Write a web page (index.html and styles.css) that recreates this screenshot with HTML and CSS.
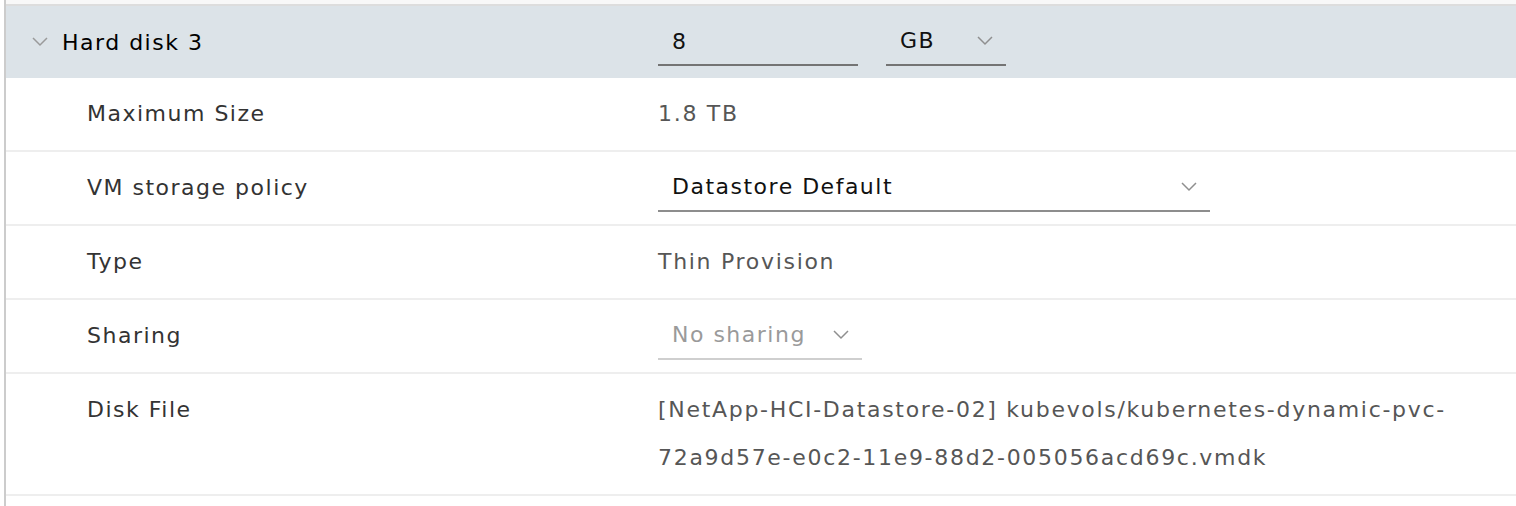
FILE: index.html
```html
<!DOCTYPE html>
<html lang="en">
<head>
<meta charset="utf-8">
<title>Hard disk 3</title>
<link rel="stylesheet" href="styles.css">
</head>
<body>
<div class="panel">
  <div class="top-strip"></div>
  <div class="stack-header">
    <div class="stack-title">
      <svg class="chev chev-head" width="16" height="10" viewBox="0 0 16 10"><polyline points="1,1 8,8 15,1"/></svg>
      <span>Hard disk 3</span>
    </div>
    <div class="stack-controls">
      <div class="field field-dark num">8</div>
      <div class="field field-dark select unit"><span>GB</span><svg class="chev" width="16" height="10" viewBox="0 0 16 10"><polyline points="1,1 8,8 15,1"/></svg></div>
    </div>
  </div>
  <div class="row">
    <div class="label">Maximum Size</div>
    <div class="value">1.8 TB</div>
  </div>
  <div class="row">
    <div class="label">VM storage policy</div>
    <div class="value"><div class="field field-mid select policy"><span>Datastore Default</span><svg class="chev" width="16" height="10" viewBox="0 0 16 10"><polyline points="1,1 8,8 15,1"/></svg></div></div>
  </div>
  <div class="row">
    <div class="label">Type</div>
    <div class="value">Thin Provision</div>
  </div>
  <div class="row">
    <div class="label">Sharing</div>
    <div class="value"><div class="field field-light select disabled sharing"><span>No sharing</span><svg class="chev" width="16" height="10" viewBox="0 0 16 10"><polyline points="1,1 8,8 15,1"/></svg></div></div>
  </div>
  <div class="row">
    <div class="label">Disk File</div>
    <div class="value">[NetApp-HCI-Datastore-02] kubevols/kubernetes-dynamic-pvc-<br>72a9d57e-e0c2-11e9-88d2-005056acd69c.vmdk</div>
  </div>
</div>
</body>
</html>
```
FILE: styles.css
```css
* { box-sizing: border-box; }
html, body { margin: 0; padding: 0; background: #fff; }
body {
  font-family: "DejaVu Sans", "Open Sans", sans-serif;
  font-size: 22px;
  letter-spacing: 1.5px;
  color: #333;
}
.panel {
  margin-left: 4px;
  border-left: 2px solid #cccccc;
  min-height: 506px;
}
.top-strip {
  height: 6px;
  background: #f8f8f8;
  border-bottom: 2px solid #dddddd;
}
.stack-header {
  display: grid;
  grid-template-columns: 652px 1fr;
  align-items: center;
  height: 72px;
  background: #dce3e8;
}
.stack-title {
  display: flex;
  align-items: center;
  gap: 14px;
  padding-left: 26px;
  color: #000;
}
.stack-controls {
  display: flex;
  align-items: center;
  gap: 28px;
}
.chev polyline {
  fill: none;
  stroke: #8f8f8f;
  stroke-width: 1.5;
}
.chev-head polyline { stroke: #9a9a9a; }
.field {
  height: 48px;
  line-height: 48px;
  border-bottom: 2px solid #747474;
  padding: 0 13px 0 14px;
  color: #111;
}
.field-dark { border-bottom-color: #747474; }
.field-mid { border-bottom-color: #8d8d8d; }
.field-light { border-bottom-color: #cfcfcf; }
.select {
  display: flex;
  align-items: center;
  justify-content: space-between;
}
.num { width: 200px; }
.unit { width: 120px; }
.policy { width: 552px; }
.sharing { width: 204px; }
.disabled { color: #9a9a9a; }
.row {
  display: grid;
  grid-template-columns: 652px 1fr;
  align-items: start;
  padding: 12px 0;
  border-bottom: 2px solid #eeeeee;
}
.label {
  padding-left: 81px;
  line-height: 48px;
  color: #333;
}
.value {
  line-height: 48px;
  color: #565656;
  letter-spacing: 1.7px;
}
.value .field { letter-spacing: 1.5px; }
```
